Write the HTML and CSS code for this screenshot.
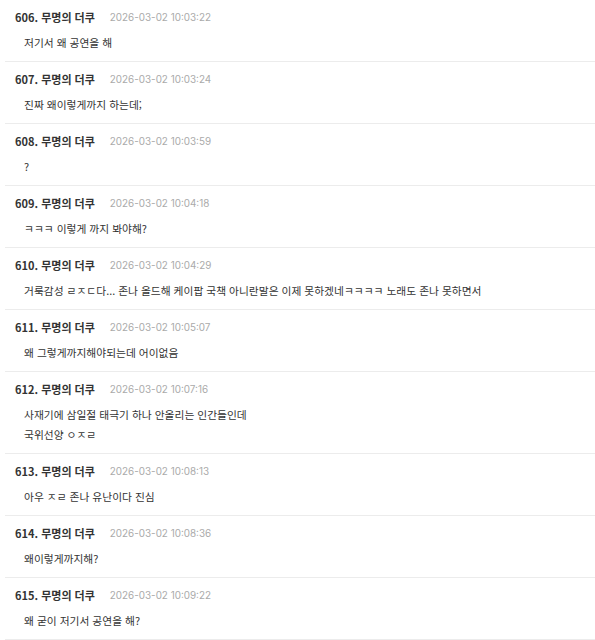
FILE: index.html
```html
<!DOCTYPE html>
<html lang="ko">
<head>
    <meta charset="UTF-8">
    <meta name="viewport" content="width=device-width, initial-scale=1.0">
    <title>댓글</title>
    <link rel="stylesheet" href="styles.css">
</head>
<body>
<div class="comment-list">
    <div class="comment">
        <div class="comment-head"><span class="comment-name">606. 무명의 더쿠</span><span class="comment-date">2026-03-02 10:03:22</span></div>
        <div class="comment-body">저기서 왜 공연을 해</div>
    </div>
    <div class="comment">
        <div class="comment-head"><span class="comment-name">607. 무명의 더쿠</span><span class="comment-date">2026-03-02 10:03:24</span></div>
        <div class="comment-body">진짜 왜이렇게까지 하는데;</div>
    </div>
    <div class="comment">
        <div class="comment-head"><span class="comment-name">608. 무명의 더쿠</span><span class="comment-date">2026-03-02 10:03:59</span></div>
        <div class="comment-body">?</div>
    </div>
    <div class="comment">
        <div class="comment-head"><span class="comment-name">609. 무명의 더쿠</span><span class="comment-date">2026-03-02 10:04:18</span></div>
        <div class="comment-body">ㅋㅋㅋ 이렇게 까지 봐야해?</div>
    </div>
    <div class="comment">
        <div class="comment-head"><span class="comment-name">610. 무명의 더쿠</span><span class="comment-date">2026-03-02 10:04:29</span></div>
        <div class="comment-body">거룩감성 ㄹㅈㄷ다... 존나 올드해 케이팝 국책 아니란말은 이제 못하겠네ㅋㅋㅋㅋ 노래도 존나 못하면서</div>
    </div>
    <div class="comment">
        <div class="comment-head"><span class="comment-name">611. 무명의 더쿠</span><span class="comment-date">2026-03-02 10:05:07</span></div>
        <div class="comment-body">왜 그렇게까지해야되는데 어이없음</div>
    </div>
    <div class="comment">
        <div class="comment-head"><span class="comment-name">612. 무명의 더쿠</span><span class="comment-date">2026-03-02 10:07:16</span></div>
        <div class="comment-body">사재기에 삼일절 태극기 하나 안올리는 인간들인데<br>국위선양 ㅇㅈㄹ</div>
    </div>
    <div class="comment">
        <div class="comment-head"><span class="comment-name">613. 무명의 더쿠</span><span class="comment-date">2026-03-02 10:08:13</span></div>
        <div class="comment-body">아우 ㅈㄹ 존나 유난이다 진심</div>
    </div>
    <div class="comment">
        <div class="comment-head"><span class="comment-name">614. 무명의 더쿠</span><span class="comment-date">2026-03-02 10:08:36</span></div>
        <div class="comment-body">왜이렇게까지해?</div>
    </div>
    <div class="comment">
        <div class="comment-head"><span class="comment-name">615. 무명의 더쿠</span><span class="comment-date">2026-03-02 10:09:22</span></div>
        <div class="comment-body">왜 굳이 저기서 공연을 해?</div>
    </div>
</div>
</body>
</html>
```

FILE: styles.css
```css
/* 기본 리셋 */
* {
    margin: 0;
    padding: 0;
    box-sizing: border-box;
}

body {
    font-family: "Noto Sans CJK KR", "Noto Sans", sans-serif;
    background-color: #ffffff;
    color: #333;
    font-size: 11px;
}

/* 댓글 목록 */
.comment-list {
    padding-left: 5px;
}

.comment {
    padding: 7px 0 8px 10px;
    border-bottom: 1px solid #ececec;
}

.comment-head {
    display: flex;
    align-items: center;
    gap: 15px;
    height: 20px;
}

.comment-name {
    font-weight: bold;
    color: #333;
}

.comment-date {
    font-family: "Inter", "Liberation Sans", sans-serif;
    color: #aaa;
    font-size: 9.9px;
}

.comment-body {
    margin-top: 6px;
    padding-left: 9px;
    line-height: 20px;
    font-size: 10.75px;
    color: #333;
}
```
